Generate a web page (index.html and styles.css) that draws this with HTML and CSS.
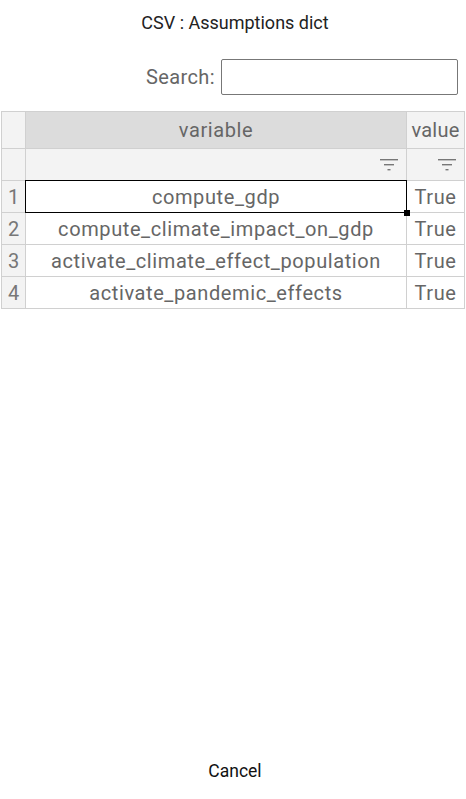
FILE: index.html
```html
<!DOCTYPE html>
<html>
<head>
<meta charset="utf-8">
<link rel="stylesheet" href="styles.css">
</head>
<body>
<div class="dialog">
  <div class="title">CSV : Assumptions dict</div>
  <div class="search">
    <label class="search-label">Search:</label>
    <input class="search-input" type="text">
  </div>
  <div class="grid">
    <div class="corner"></div>
    <div class="colhead">variable</div>
    <div class="colhead val">value</div>

    <div class="rowhead"></div>
    <div class="filter"><svg class="ficon" viewBox="0 0 18 12"><rect x="0" y="0" width="18" height="1.4"/><rect x="4" y="5" width="10" height="1.4"/><rect x="7.5" y="10" width="3" height="1.4"/></svg></div>
    <div class="filter val"><svg class="ficon" viewBox="0 0 18 12"><rect x="0" y="0" width="18" height="1.4"/><rect x="4" y="5" width="10" height="1.4"/><rect x="7.5" y="10" width="3" height="1.4"/></svg></div>

    <div class="rowhead">1</div>
    <div class="cell selected">compute_gdp<span class="handle"></span></div>
    <div class="cell val">True</div>

    <div class="rowhead">2</div>
    <div class="cell">compute_climate_impact_on_gdp</div>
    <div class="cell val">True</div>

    <div class="rowhead">3</div>
    <div class="cell">activate_climate_effect_population</div>
    <div class="cell val">True</div>

    <div class="rowhead">4</div>
    <div class="cell">activate_pandemic_effects</div>
    <div class="cell val">True</div>
  </div>
  <div class="spacer"></div>
  <div class="footer"><button class="cancel">Cancel</button></div>
</div>
</body>
</html>
```
FILE: styles.css
```css
html, body {
  margin: 0;
  padding: 0;
  background: #fff;
  font-family: Roboto, "Liberation Sans", sans-serif;
}
.dialog {
  width: 466px;
  height: 799px;
  display: flex;
  flex-direction: column;
  box-sizing: border-box;
}
.title {
  text-align: center;
  font-size: 18px;
  color: #222;
  padding-top: 12px;
  padding-left: 4px;
  height: 46px;
  box-sizing: border-box;
  line-height: 22px;
}
.search {
  display: flex;
  justify-content: flex-end;
  align-items: center;
  gap: 6px;
  padding-right: 8px;
  height: 36px;
  margin-top: 13px;
}
.search-label {
  font-size: 20px;
  color: #666;
  letter-spacing: 0.4px;
}
.search-input {
  width: 237px;
  height: 36px;
  box-sizing: border-box;
  border: 1px solid #777;
  border-radius: 2px;
  margin: 0;
  outline: none;
}
.grid {
  margin-top: 16px;
  margin-left: 1px;
  width: 464px;
  display: grid;
  grid-template-columns: 24px 381px 58px;
  grid-auto-rows: 32px;
  grid-template-rows: 37px 32px;
  border-top: 1px solid #d0d0d0;
  border-left: 1px solid #d0d0d0;
  box-sizing: border-box;
  font-size: 20px;
  color: #666;
  letter-spacing: 0.6px;
}
.grid > div {
  border-right: 1px solid #d0d0d0;
  border-bottom: 1px solid #d0d0d0;
  display: flex;
  align-items: center;
  justify-content: center;
  box-sizing: border-box;
  white-space: nowrap;
}
.corner, .rowhead {
  background: #f3f3f3;
}
.rowhead {
  justify-content: flex-start !important;
  padding-left: 6px;
  color: #777;
}
.colhead {
  background: #dcdcdc;
}
.colhead.val {
  background: #f3f3f3;
  letter-spacing: 0.2px;
}
.filter {
  background: #f3f3f3;
  justify-content: flex-end !important;
  padding-right: 8px;
}
.ficon {
  width: 18px;
  height: 12px;
  fill: #777;
}
.cell {
  background: #fff;
}
.selected {
  position: relative;
  border: 1px solid #000 !important;
  margin: -1px 0 0 -1px;
  width: calc(100% + 1px);
  height: calc(100% + 1px);
}
.handle {
  position: absolute;
  right: -4px;
  bottom: -4px;
  width: 6px;
  height: 6px;
  background: #000;
}
.spacer {
  flex: 1;
}
.footer {
  display: flex;
  justify-content: center;
  padding-bottom: 12px;
  padding-left: 4px;
}
.cancel {
  background: none;
  border: none;
  font-family: Roboto, "Liberation Sans", sans-serif;
  font-size: 17.5px;
  color: #111;
  padding: 6px 16px;
}
```
